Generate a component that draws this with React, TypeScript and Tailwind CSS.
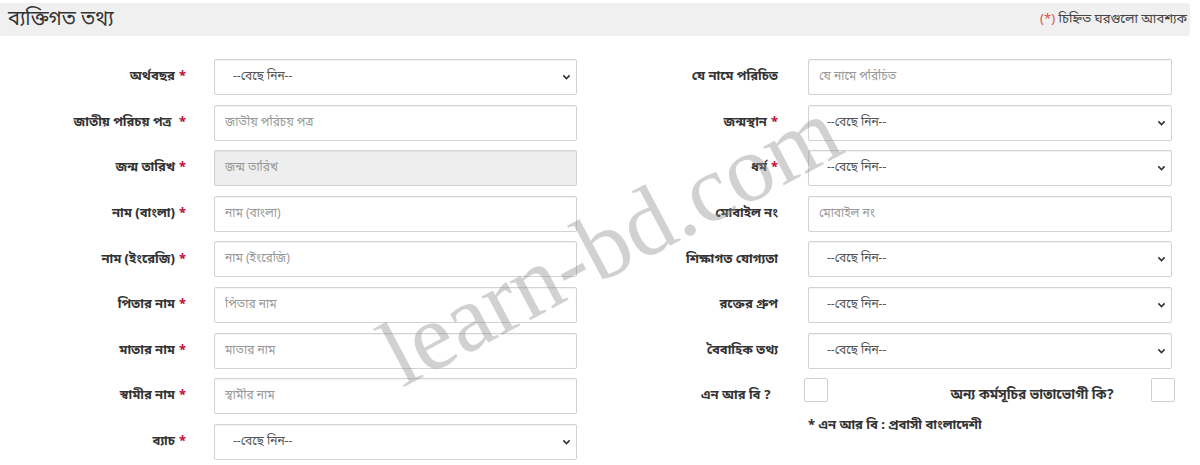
import React from "react";

const font = { fontFamily: '"Noto Sans Bengali", "Noto Sans", "DejaVu Sans", sans-serif' };

function Chevron() {
  return (
    <svg width="9" height="9" viewBox="0 0 10 10" className="absolute right-[5px] top-1/2 -translate-y-1/2">
      <path d="M1.5 3.2 L5 6.7 L8.5 3.2" fill="none" stroke="#333" strokeWidth="1.8" />
    </svg>
  );
}

function Label({ text, req, w }: { text: string; req?: boolean; w: string }) {
  return (
    <div className={`${w} shrink-0 text-right text-[13px] font-bold text-[#333]`}>
      {text}
      {req && <span className="ml-1 text-[#c0143c]">*</span>}
    </div>
  );
}

function Field({ kind, ph, w, disabled }: { kind: "input" | "select"; ph?: string; w: string; disabled?: boolean }) {
  if (kind === "select")
    return (
      <div className={`relative ${w} h-9 shrink-0 rounded-[2px] border border-[#d2d2d2] bg-white pl-[18px] text-[12px] leading-[34px] text-[#555] shadow-[inset_0_1px_1px_rgba(0,0,0,0.05)]`}>
        --বেছে নিন--
        <Chevron />
      </div>
    );
  return (
    <input
      disabled={disabled}
      placeholder={ph}
      className={`${w} h-9 shrink-0 rounded-[2px] border border-[#d2d2d2] px-[10px] text-[12px] text-[#555] outline-none placeholder:text-[#999] shadow-[inset_0_1px_1px_rgba(0,0,0,0.05)] ${disabled ? "bg-[#eeeeee]" : "bg-white"}`}
      style={font}
    />
  );
}

const left: { label: string; req?: boolean; kind: "input" | "select"; ph?: string; disabled?: boolean }[] = [
  { label: "অর্থবছর", req: true, kind: "select" },
  { label: "জাতীয় পরিচয় পত্র ", req: true, kind: "input", ph: "জাতীয় পরিচয় পত্র" },
  { label: "জন্ম তারিখ", req: true, kind: "input", ph: "জন্ম তারিখ", disabled: true },
  { label: "নাম (বাংলা)", req: true, kind: "input", ph: "নাম (বাংলা)" },
  { label: "নাম (ইংরেজি)", req: true, kind: "input", ph: "নাম (ইংরেজি)" },
  { label: "পিতার নাম", req: true, kind: "input", ph: "পিতার নাম" },
  { label: "মাতার নাম", req: true, kind: "input", ph: "মাতার নাম" },
  { label: "স্বামীর নাম", req: true, kind: "input", ph: "স্বামীর নাম" },
  { label: "ব্যাচ", req: true, kind: "select" },
];

const right: { label: string; req?: boolean; kind: "input" | "select"; ph?: string }[] = [
  { label: "যে নামে পরিচিত", kind: "input", ph: "যে নামে পরিচিত" },
  { label: "জন্মস্থান", req: true, kind: "select" },
  { label: "ধর্ম", req: true, kind: "select" },
  { label: "মোবাইল নং", kind: "input", ph: "মোবাইল নং" },
  { label: "শিক্ষাগত যোগ্যতা", kind: "select" },
  { label: "রক্তের গ্রুপ", kind: "select" },
  { label: "বৈবাহিক তথ্য", kind: "select" },
];

function Box() {
  return <div className="h-6 w-6 shrink-0 rounded-[2px] border border-[#cfcfcf] bg-white" />;
}

export default function App() {
  return (
    <div className="relative h-[465px] w-[1200px] overflow-hidden bg-white pt-[3px]" style={font}>
      <div className="mr-[10px] flex h-[33px] items-center justify-between rounded-r-[4px] bg-[#f0f0f0] pl-2 pr-[3px]">
        <span className="text-[20px] text-[#333]">ব্যক্তিগত তথ্য</span>
        <span className="text-[13px] text-[#444]">
          <span className="text-[#d9534f]">(*)</span> চিহ্নিত ঘরগুলো আবশ্যক
        </span>
      </div>

      <div className="mt-[23px] flex">
        <div className="flex w-[577px] flex-col gap-[9.6px]">
          {left.map((r) => (
            <div key={r.label} className="flex h-9 items-center">
              <Label text={r.label} req={r.req} w="w-[186px]" />
              <div className="ml-[28px]">
                <Field kind={r.kind} ph={r.ph} w="w-[363px]" disabled={r.disabled} />
              </div>
            </div>
          ))}
        </div>

        <div className="flex flex-col gap-[9.6px]">
          {right.map((r) => (
            <div key={r.label} className="flex h-9 items-center">
              <Label text={r.label} req={r.req} w="w-[201px]" />
              <div className="ml-[30px]">
                <Field kind={r.kind} ph={r.ph} w="w-[364px]" />
              </div>
            </div>
          ))}
          <div className="flex h-9 items-start">
            <div className="w-[194px] shrink-0 pt-[8px] text-right text-[13px] font-bold text-[#333]">এন আর বি ?</div>
            <div className="ml-[33px]">
              <Box />
            </div>
            <div className="w-[286px] shrink-0 pt-[8px] text-right text-[13.5px] font-bold text-[#333]">অন্য কর্মসূচির ভাতাভোগী কি?</div>
            <div className="ml-[37px]">
              <Box />
            </div>
          </div>
          <div className="-mt-[8px] pl-[231px] text-[13px] font-bold text-[#333]">* এন আর বি : প্রবাসী বাংলাদেশী</div>
        </div>
      </div>

      <div
        className="pointer-events-none absolute left-[610px] top-[242px] -translate-x-1/2 -translate-y-1/2 -rotate-[28deg] whitespace-nowrap text-[95px] leading-none text-[rgba(140,140,140,0.4)]"
        style={{ fontFamily: '"Liberation Serif", serif' }}
      >
        learn-bd.com
      </div>
    </div>
  );
}
